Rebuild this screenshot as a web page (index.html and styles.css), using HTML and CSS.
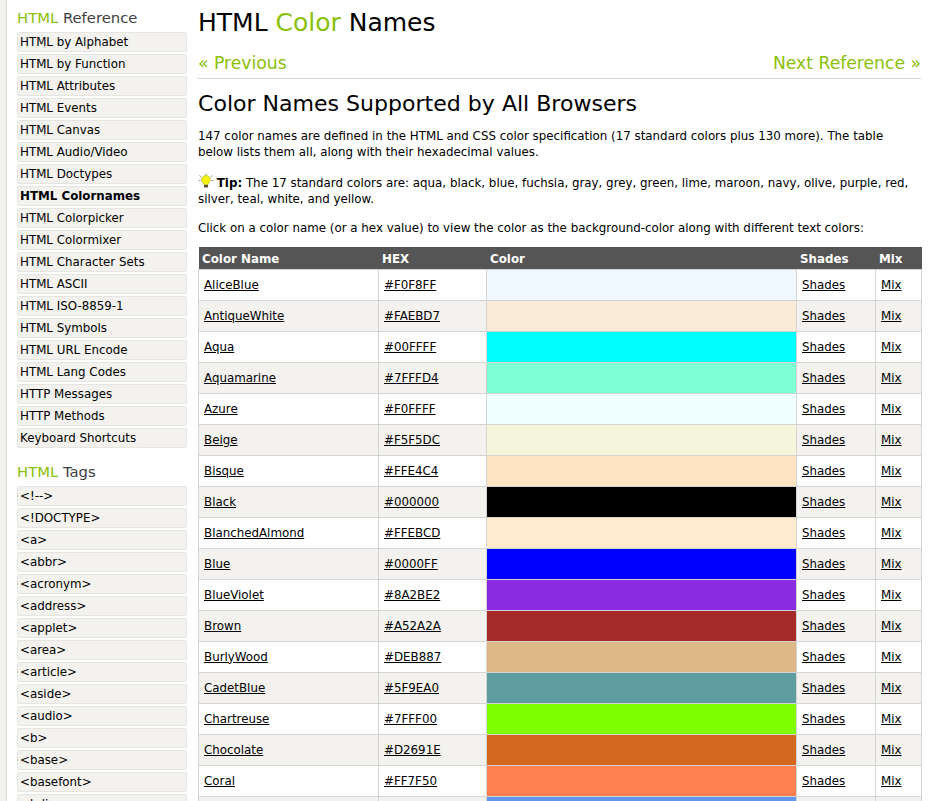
FILE: index.html
```html
<!DOCTYPE html>
<html lang="en">
<head>
<meta charset="utf-8">
<title>HTML Color Names</title>
<link rel="stylesheet" href="styles.css">
</head>
<body>
<div class="page">
<nav class="side">
<h2 class="side-title first"><span class="green">HTML</span> Reference</h2>
<a class="side-link">HTML by Alphabet</a>
<a class="side-link">HTML by Function</a>
<a class="side-link">HTML Attributes</a>
<a class="side-link">HTML Events</a>
<a class="side-link">HTML Canvas</a>
<a class="side-link">HTML Audio/Video</a>
<a class="side-link">HTML Doctypes</a>
<a class="side-link active">HTML Colornames</a>
<a class="side-link">HTML Colorpicker</a>
<a class="side-link">HTML Colormixer</a>
<a class="side-link">HTML Character Sets</a>
<a class="side-link">HTML ASCII</a>
<a class="side-link">HTML ISO-8859-1</a>
<a class="side-link">HTML Symbols</a>
<a class="side-link">HTML URL Encode</a>
<a class="side-link">HTML Lang Codes</a>
<a class="side-link">HTTP Messages</a>
<a class="side-link">HTTP Methods</a>
<a class="side-link">Keyboard Shortcuts</a>
<h2 class="side-title"><span class="green">HTML</span> Tags</h2>
<a class="side-link">&lt;!--&gt;</a>
<a class="side-link">&lt;!DOCTYPE&gt;</a>
<a class="side-link">&lt;a&gt;</a>
<a class="side-link">&lt;abbr&gt;</a>
<a class="side-link">&lt;acronym&gt;</a>
<a class="side-link">&lt;address&gt;</a>
<a class="side-link">&lt;applet&gt;</a>
<a class="side-link">&lt;area&gt;</a>
<a class="side-link">&lt;article&gt;</a>
<a class="side-link">&lt;aside&gt;</a>
<a class="side-link">&lt;audio&gt;</a>
<a class="side-link">&lt;b&gt;</a>
<a class="side-link">&lt;base&gt;</a>
<a class="side-link">&lt;basefont&gt;</a>
<a class="side-link">&lt;bdi&gt;</a>
</nav>
<main class="main">
<h1 class="title">HTML <span class="green">Color</span> Names</h1>
<div class="pager"><a class="green">« Previous</a><a class="green">Next Reference »</a></div>
<h2 class="subtitle">Color Names Supported by All Browsers</h2>
<p class="intro">147 color names are defined in the HTML and CSS color specification (17 standard colors plus 130 more). The table below lists them all, along with their hexadecimal values.</p>
<p class="tip"><svg class="bulb" width="16" height="16" viewBox="0 0 16 16"><path d="M8 .5v1.500M1.500 2.500l2 1.500M14.500 2.500l-2 1.500M.5 7.500h2M15.500 7.500h-2" stroke="#9a9a8a" stroke-width="1" fill="none"/><path d="M8 2.500a4.300 4.300 0 0 0-4.300 4.300c0 1.800 1.500 2.700 2.200 4.700h4.200c.7-2 2.200-2.900 2.200-4.700A4.300 4.300 0 0 0 8 2.500z" fill="#f4f410" stroke="#a8a800" stroke-width=".6"/><path d="M6 12h4v2.500H6z" fill="#55553a"/></svg> <b>Tip:</b> The 17 standard colors are: aqua, black, blue, fuchsia, gray, grey, green, lime, maroon, navy, olive, purple, red, silver, teal, white, and yellow.</p>
<p class="intro click">Click on a color name (or a hex value) to view the color as the background-color along with different text colors:</p>
<table class="colors">
<thead><tr><th class="c-name">Color Name</th><th class="c-hex">HEX</th><th class="c-color">Color</th><th class="c-shades">Shades</th><th class="c-mix">Mix</th></tr></thead>
<tbody>
<tr><td><a>AliceBlue</a></td><td><a>#F0F8FF</a></td><td class="swatch" style="background:#F0F8FF"></td><td><a>Shades</a></td><td><a>Mix</a></td></tr>
<tr><td><a>AntiqueWhite</a></td><td><a>#FAEBD7</a></td><td class="swatch" style="background:#FAEBD7"></td><td><a>Shades</a></td><td><a>Mix</a></td></tr>
<tr><td><a>Aqua</a></td><td><a>#00FFFF</a></td><td class="swatch" style="background:#00FFFF"></td><td><a>Shades</a></td><td><a>Mix</a></td></tr>
<tr><td><a>Aquamarine</a></td><td><a>#7FFFD4</a></td><td class="swatch" style="background:#7FFFD4"></td><td><a>Shades</a></td><td><a>Mix</a></td></tr>
<tr><td><a>Azure</a></td><td><a>#F0FFFF</a></td><td class="swatch" style="background:#F0FFFF"></td><td><a>Shades</a></td><td><a>Mix</a></td></tr>
<tr><td><a>Beige</a></td><td><a>#F5F5DC</a></td><td class="swatch" style="background:#F5F5DC"></td><td><a>Shades</a></td><td><a>Mix</a></td></tr>
<tr><td><a>Bisque</a></td><td><a>#FFE4C4</a></td><td class="swatch" style="background:#FFE4C4"></td><td><a>Shades</a></td><td><a>Mix</a></td></tr>
<tr><td><a>Black</a></td><td><a>#000000</a></td><td class="swatch" style="background:#000000"></td><td><a>Shades</a></td><td><a>Mix</a></td></tr>
<tr><td><a>BlanchedAlmond</a></td><td><a>#FFEBCD</a></td><td class="swatch" style="background:#FFEBCD"></td><td><a>Shades</a></td><td><a>Mix</a></td></tr>
<tr><td><a>Blue</a></td><td><a>#0000FF</a></td><td class="swatch" style="background:#0000FF"></td><td><a>Shades</a></td><td><a>Mix</a></td></tr>
<tr><td><a>BlueViolet</a></td><td><a>#8A2BE2</a></td><td class="swatch" style="background:#8A2BE2"></td><td><a>Shades</a></td><td><a>Mix</a></td></tr>
<tr><td><a>Brown</a></td><td><a>#A52A2A</a></td><td class="swatch" style="background:#A52A2A"></td><td><a>Shades</a></td><td><a>Mix</a></td></tr>
<tr><td><a>BurlyWood</a></td><td><a>#DEB887</a></td><td class="swatch" style="background:#DEB887"></td><td><a>Shades</a></td><td><a>Mix</a></td></tr>
<tr><td><a>CadetBlue</a></td><td><a>#5F9EA0</a></td><td class="swatch" style="background:#5F9EA0"></td><td><a>Shades</a></td><td><a>Mix</a></td></tr>
<tr><td><a>Chartreuse</a></td><td><a>#7FFF00</a></td><td class="swatch" style="background:#7FFF00"></td><td><a>Shades</a></td><td><a>Mix</a></td></tr>
<tr><td><a>Chocolate</a></td><td><a>#D2691E</a></td><td class="swatch" style="background:#D2691E"></td><td><a>Shades</a></td><td><a>Mix</a></td></tr>
<tr><td><a>Coral</a></td><td><a>#FF7F50</a></td><td class="swatch" style="background:#FF7F50"></td><td><a>Shades</a></td><td><a>Mix</a></td></tr>
<tr><td><a>CornflowerBlue</a></td><td><a>#6495ED</a></td><td class="swatch" style="background:#6495ED"></td><td><a>Shades</a></td><td><a>Mix</a></td></tr>
</tbody>
</table>
</main>
</div>
</body>
</html>
```
FILE: styles.css
```css
* { box-sizing: border-box; }
html, body { margin: 0; padding: 0; height: 801px; overflow: hidden; background: #f3f2ee; }
body { font-family: "DejaVu Sans", Verdana, sans-serif; font-size: 11.85px; color: #000; }
.page { display: flex; align-items: flex-start; height: 801px; overflow: hidden; border-left: 1px solid #dcdcdc; margin-left: 6px; padding-left: 10px; background: #fff; }
.green { color: #8ac007; }
.side { width: 170px; flex: none; display: flex; flex-direction: column; gap: 2px; }
.side-title { font-size: 14.800px; font-weight: normal; color: #404040; margin: 0; line-height: 20px; }
.side-title.first { padding-top: 8px; margin-bottom: 2px; }
.side-title:not(.first) { margin-top: 12px; margin-bottom: 2px; }
.side-link { display: block; height: 20px; line-height: 18px; padding: 0 0 0 2px; background: #f3f2ee; border: 1px solid #e6e5e1; border-radius: 2px; white-space: nowrap; }
.active { font-weight: bold; }
.main { width: 723px; margin-left: 11px; flex: none; }
.title { font-size: 25px; font-weight: normal; margin: 0; line-height: 30px; padding-top: 8px; }
.pager { display: flex; justify-content: space-between; font-size: 17.200px; line-height: 20px; margin-top: 15px; padding-bottom: 5px; border-bottom: 1px solid #d4d4d4; }
.subtitle { font-size: 22.050px; font-weight: normal; margin: 10px 0 0; line-height: 30px; }
.intro, .tip { margin: 0; line-height: 16px; }
.intro { margin-top: 9px; }
.tip { margin-top: 13px; }
.intro.click { margin-top: 13px; }
.bulb { vertical-align: -2px; margin-right: -1px; }
.colors { border-collapse: collapse; table-layout: fixed; width: 723px; margin-top: 11px; }
.colors th { background: #555; color: #fff; font-weight: bold; text-align: left; height: 22px; padding: 3px 3.500px 0; }
.colors td { height: 31px; padding: 0 5px; border: 1px solid #d4d4d4; }
.colors a { text-decoration: underline; }
.colors tbody tr:nth-child(even) td { background: #f3f2ee; }
.colors td.swatch { padding: 0; }
.c-name { width: 180px; }
.c-hex { width: 108px; }
.c-color { width: 310px; }
.c-shades { width: 79px; }
.c-mix { width: 46px; }
```
